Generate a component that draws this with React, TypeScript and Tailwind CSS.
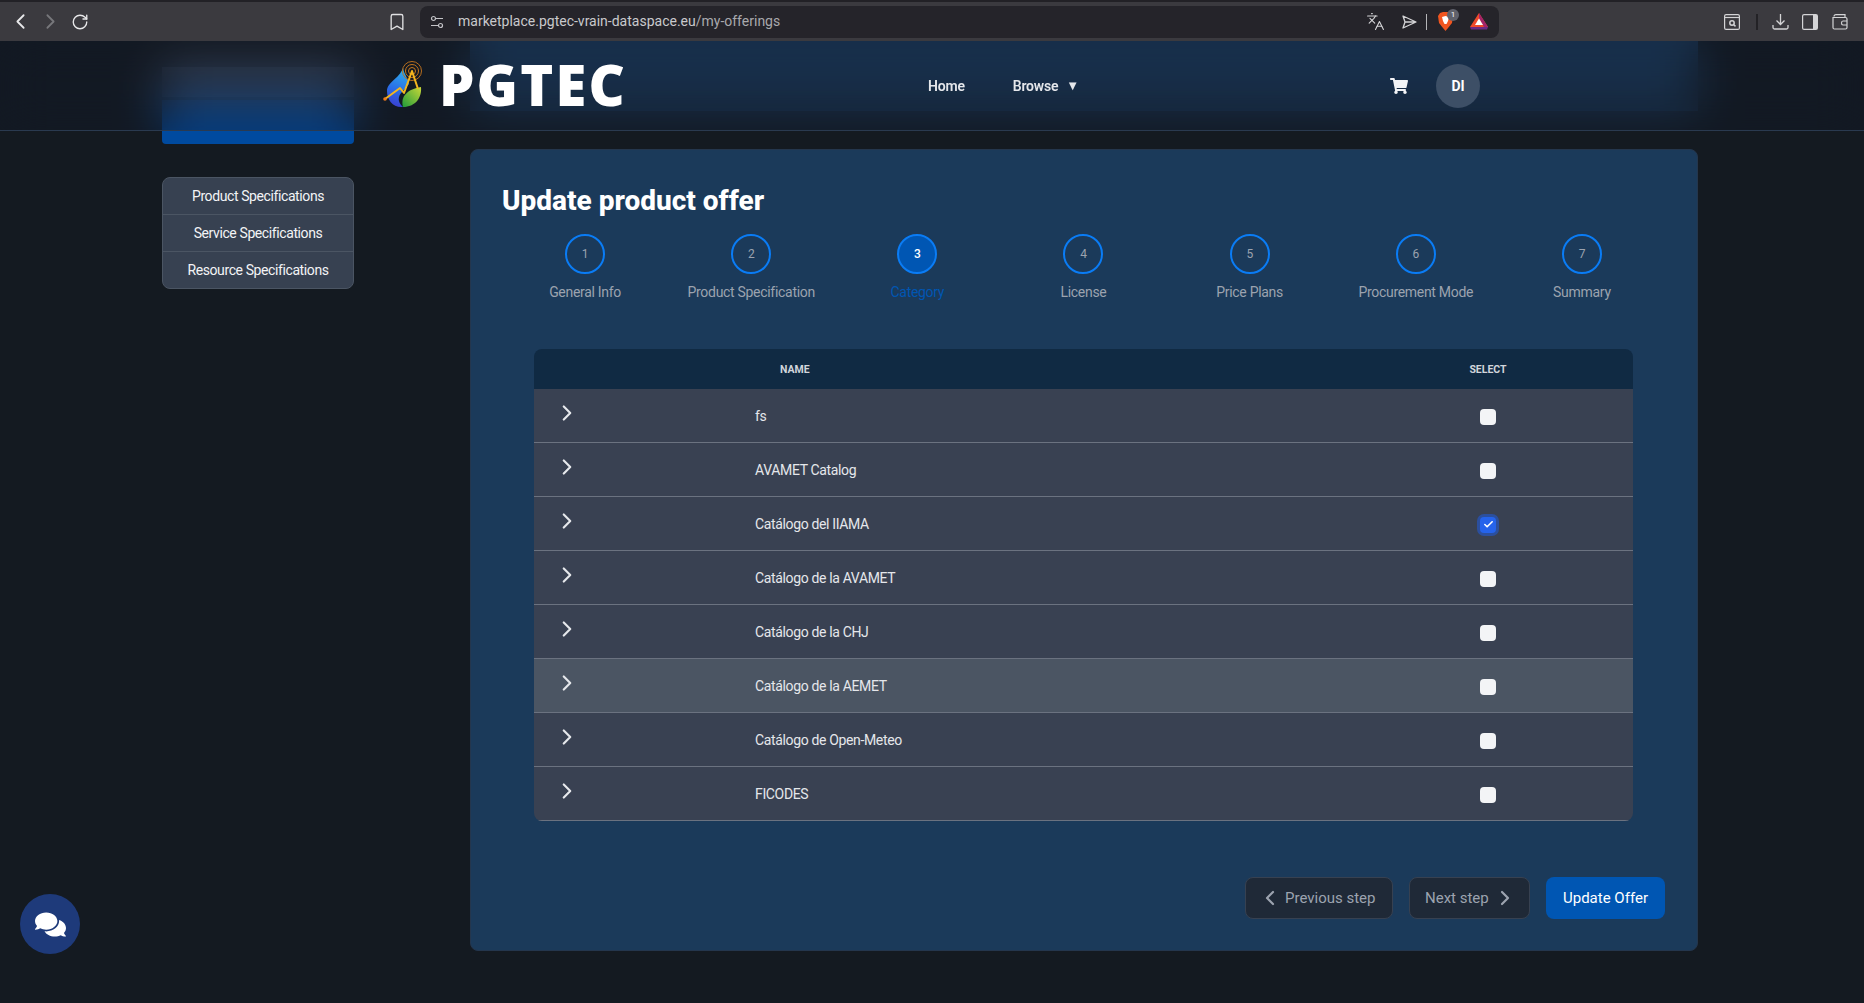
import React from "react";
import { Bookmark, Check, ChevronLeft, ChevronRight, Languages, RotateCw } from "lucide-react";
import { FaComments, FaShoppingCart } from "react-icons/fa";

const steps = ["General Info", "Product Specification", "Category", "License", "Price Plans", "Procurement Mode", "Summary"];
const rows = ["fs", "AVAMET Catalog", "Catálogo del IIAMA", "Catálogo de la AVAMET", "Catálogo de la CHJ", "Catálogo de la AEMET", "Catálogo de Open-Meteo", "FICODES"];

function Logo() {
  return (
    <svg width="60" height="60" viewBox="375 55 60 60" fill="none" className="shrink-0">
      <defs>
        <linearGradient id="fl" x1="0.6" y1="0" x2="0.4" y2="1">
          <stop offset="0" stopColor="#2fb0ea" />
          <stop offset="0.55" stopColor="#2a6fe8" />
          <stop offset="1" stopColor="#3a3fd0" />
        </linearGradient>
        <linearGradient id="lf" x1="1" y1="0" x2="0" y2="1">
          <stop offset="0" stopColor="#c8d838" />
          <stop offset="1" stopColor="#1f9a3a" />
        </linearGradient>
      </defs>
      <path d="M403 67C404 73 408 77 409 83L402 91C398 95 397 101 403 106C393 107 387 99 387 90C387 81 399 78 403 67Z" fill="url(#fl)" />
      <path d="M421 86C422 97 415 106 403 106C400 95 408 88 421 86Z" fill="url(#lf)" />
      <circle cx="412" cy="70" r="3.5" stroke="#c8791e" strokeWidth="1" />
      <circle cx="412" cy="70" r="6.5" stroke="#c8791e" strokeWidth="1" />
      <circle cx="412" cy="70" r="9.5" stroke="#b86f1e" strokeWidth="1" />
      <path d="M385 98L400 87L404 92L412 70L418 88" stroke="#f3b61f" strokeWidth="2" strokeLinejoin="round" />
      <circle cx="385" cy="98" r="1.8" fill="#f07a1a" />
    </svg>
  );
}

function Chrome() {
  const c = "#d4d4d6";
  return (
    <div className="relative z-20 flex h-[41px] shrink-0 items-center border-t-2 border-[#222126] bg-[#3b3a3f]">
      <ChevronLeft size={25} color="#e8e8ea" strokeWidth={1.7} className="ml-[8px]" />
      <ChevronRight size={25} color="#77777b" strokeWidth={1.7} className="ml-[5px]" />
      <RotateCw size={18} color="#e8e8ea" strokeWidth={1.8} className="ml-[8px]" />
      <Bookmark size={20} color="#e0e0e2" strokeWidth={1.6} className="ml-[298px]" />
      <div className="ml-[13px] flex h-[32px] w-[1079px] items-center rounded-lg bg-[#25242a] pl-[10px]">
        <svg width="14" height="14" viewBox="0 0 14 14" fill="none" stroke="#c4c4c8" strokeWidth="1.2" className="shrink-0">
          <circle cx="3.5" cy="3.5" r="2" />
          <path d="M6 3.5H13M1 10.5H8" />
          <circle cx="10.5" cy="10.5" r="2" />
        </svg>
        <span className="ml-[14px] w-[911px] shrink-0 font-['Roboto',sans-serif] text-[14px] text-[#c9c9cc]">
          marketplace.pgtec-vrain-dataspace.eu<span className="text-[#a9a9ad]">/my-offerings</span>
        </span>
        <Languages size={19} color={c} strokeWidth={1.4} className="-ml-[3px] shrink-0" />
        <svg width="15" height="14" viewBox="0 0 15 14" fill="none" stroke={c} strokeWidth="1.3" className="ml-[17px] shrink-0">
          <path d="M1 1L14 7L1 13L3 7L1 1ZM3 7H14" strokeLinejoin="round" />
        </svg>
        <div className="ml-[9px] h-[16px] w-px shrink-0 bg-[#b5b5b8]" />
        <div className="relative ml-[11px] h-[20px] w-[15px] shrink-0">
          <svg width="15" height="19" viewBox="0 0 15 19">
            <path d="M2 1L5 0H10L13 1L15 4L14 11L10 16L7.5 19L5 16L1 11L0 4Z" fill="#f0551f" />
            <path d="M4 5L7.5 4L11 5L10 9L8.5 12H6.5L5 9Z" fill="#fff" />
          </svg>
          <span className="absolute -top-[3px] left-[9px] flex h-[12px] w-[12px] items-center justify-center rounded-full bg-[#60626c] font-['Roboto',sans-serif] text-[8px] text-white">1</span>
        </div>
        <svg width="18" height="17" viewBox="0 0 18 17" className="ml-[17px] shrink-0">
          <path d="M9 0L18 14H0Z" fill="#ef4a2b" />
          <path d="M0 14H18L17 16.5H1Z" fill="#6c2a85" />
          <path d="M9 0L18 14L14 14L9 5Z" fill="#a3246a" />
          <path d="M9 5.5L13 12H5Z" fill="#fff" />
        </svg>
      </div>
      <svg width="16" height="16" viewBox="0 0 16 16" fill="none" stroke={c} strokeWidth="1.2" className="ml-[225px]">
        <rect x="0.6" y="0.6" width="14.8" height="14.8" rx="1.5" />
        <path d="M1 3.5H15" />
        <circle cx="8" cy="9" r="2.2" strokeWidth="1.5" />
        <path d="M9.8 10.8L11.5 12.4" strokeWidth="1.5" />
      </svg>
      <div className="ml-[16px] h-[16px] w-[2px] bg-[#232226]" />
      <svg width="17" height="17" viewBox="0 0 17 17" fill="none" stroke={c} strokeWidth="1.3" className="ml-[14px]">
        <path d="M8.5 1V11M4.5 7.5L8.5 11.5L12.5 7.5M1 12V14.5Q1 16 2.5 16H14.5Q16 16 16 14.5V12" />
      </svg>
      <svg width="16" height="16" viewBox="0 0 16 16" fill="none" stroke={c} strokeWidth="1.2" className="ml-[13px]">
        <rect x="0.6" y="0.6" width="14.8" height="14.8" rx="1.5" />
        <rect x="11" y="1" width="4" height="14" fill={c} stroke="none" />
      </svg>
      <svg width="16" height="16" viewBox="0 0 16 16" fill="none" stroke={c} strokeWidth="1.2" className="ml-[14px]">
        <path d="M2 2.5Q2 0.7 4 0.7H13V3M1 3.5H13.5Q15 3.5 15 5V13.5Q15 15 13.5 15H2.5Q1 15 1 13.5Z" />
        <path d="M15 7H11Q9.5 7 9.5 9Q9.5 11 11 11H15" />
      </svg>
    </div>
  );
}

function Header() {
  return (
    <header className="absolute left-0 right-0 top-0 z-10 flex h-[90px] items-center border-b border-[#2a3a50] bg-[#111827]/30 pt-[1px] backdrop-blur-xl">
      <div className="ml-[375px] flex items-center">
        <Logo />
        <span className="-mt-[5px] ml-[4px] font-['Open_Sans',sans-serif] text-[56px] font-extrabold leading-none tracking-[2.2px] text-white">PGTEC</span>
      </div>
      <nav className="ml-[301px] flex w-[150px] items-center font-['Roboto',sans-serif] text-[14px] font-semibold tracking-[-0.2px] text-[#e5e7eb]">
        <span>Home</span>
        <span className="ml-[48px]">Browse</span>
        <span className="ml-[8px] text-[13px]">▼</span>
      </nav>
      <FaShoppingCart size={18} color="#f3f4f6" className="ml-[312px]" />
      <div className="ml-[28px] flex h-[44px] w-[44px] items-center justify-center rounded-full bg-[#3d4f66] font-['Roboto',sans-serif] text-[14px] font-bold text-white">DI</div>
    </header>
  );
}

function Aside() {
  return (
    <aside className="ml-[162px] flex w-[192px] shrink-0 flex-col pt-[26px]">
      <div className="h-[30px] bg-[#4a5568]" />
      <div className="mt-[3px] h-[44px] rounded-b bg-[#004a9f]" />
      <div className="mt-[33px] flex flex-col overflow-hidden rounded-lg border border-[#4b5563] bg-[#374151] text-center text-[14px] tracking-[-0.4px] text-[#f3f4f6]">
        <div className="flex h-[37px] items-center justify-center border-b border-[#4b5563]">Product Specifications</div>
        <div className="flex h-[37px] items-center justify-center border-b border-[#4b5563]">Service Specifications</div>
        <div className="flex h-[36px] items-center justify-center">Resource Specifications</div>
      </div>
    </aside>
  );
}

function Stepper() {
  return (
    <div className="mt-[15px] grid grid-cols-7 pr-[1px] tracking-[-0.3px]">
      {steps.map((s, i) => (
        <div key={s} className="flex flex-col items-center">
          <div className={i === 2 ? "flex h-[40px] w-[40px] items-center justify-center rounded-full border-2 border-[#0a7cf5] bg-[#0056b3] text-[12px] font-medium text-white" : "flex h-[40px] w-[40px] items-center justify-center rounded-full border-2 border-[#0a7cf5] text-[12px] text-[#9ca3af]"}>
            {i + 1}
          </div>
          <span className={i === 2 ? "mt-[8px] text-[14px] leading-5 text-[#0056b3]" : "mt-[8px] text-[14px] leading-5 text-[#9ca3af]"}>{s}</span>
        </div>
      ))}
    </div>
  );
}

function CategoryTable() {
  return (
    <div className="ml-8 mr-[33px] mt-[47px] overflow-hidden rounded-lg">
      <div className="grid h-[40px] grid-cols-[221px_1fr_290px] items-center bg-[#102a43] pt-[2px] text-[10.5px] font-bold text-[#d1d5db]">
        <span />
        <span className="pl-[25px]">NAME</span>
        <span className="text-center">SELECT</span>
      </div>
      {rows.map((r, i) => (
        <div key={r} className={i === 5 ? "grid h-[54px] grid-cols-[221px_1fr_290px] border-b border-[#6b7280] bg-[#4b5563] text-[14px] tracking-[-0.35px] text-[#e5e7eb]" : "grid h-[54px] grid-cols-[221px_1fr_290px] border-b border-[#6b7280] bg-[#394152] text-[14px] tracking-[-0.35px] text-[#e5e7eb]"}>
          <div className="pl-[20px] pt-[11px]">
            <ChevronRight size={26} color="#e5e7eb" strokeWidth={2} />
          </div>
          <div className="flex items-center pt-[2px]">{r}</div>
          <div className="flex items-center justify-center pt-[2px]">
            {i === 2 ? (
              <div className="flex h-[16px] w-[16px] items-center justify-center rounded-[4px] bg-[#2563eb] ring-[3px] ring-[#2b4f9e]">
                <Check size={11} color="#fff" strokeWidth={3.5} />
              </div>
            ) : (
              <div className="h-[16px] w-[16px] rounded-[4px] bg-[#f3f4f6]" />
            )}
          </div>
        </div>
      ))}
    </div>
  );
}

function Actions() {
  return (
    <div className="mt-[56px] flex justify-end gap-4 pr-[1px] text-[15px]">
      <div className="flex h-[42px] w-[148px] items-center gap-[3px] rounded-lg border border-[#374151] bg-[#1f2937] pl-[12px] text-[#9ca3af]">
        <ChevronLeft size={24} strokeWidth={2.2} />
        <span>Previous step</span>
      </div>
      <div className="flex h-[42px] w-[121px] items-center gap-[4px] rounded-lg border border-[#374151] bg-[#1f2937] pl-[15px] text-[#9ca3af]">
        <span>Next step</span>
        <ChevronRight size={24} strokeWidth={2.2} />
      </div>
      <div className="flex h-[42px] w-[119px] items-center justify-center rounded-lg bg-[#0056b3] text-white">Update Offer</div>
    </div>
  );
}

export default function App() {
  return (
    <div className="relative flex h-screen w-full flex-col overflow-hidden bg-[#141a21] font-['Roboto',sans-serif]">
      <Chrome />
      <main className="relative flex flex-1 items-start">
        <Header />
        <Aside />
        <div className="ml-[116px] flex w-[1228px] shrink-0 flex-col">
          <div className="h-[70px] bg-[#1b3a5a]" />
          <section className="mt-[38px] rounded-lg border border-[#24364d] bg-[#1b3a5a] px-[31px] pb-[31px] pt-[33px]">
            <h1 className="text-[28px] font-extrabold leading-9 text-white">Update product offer</h1>
            <Stepper />
            <CategoryTable />
            <Actions />
          </section>
        </div>
        <div className="absolute bottom-[49px] left-[20px] z-10 flex h-[60px] w-[60px] items-center justify-center rounded-full bg-[#1e3a7a]">
          <FaComments size={31} color="#fff" />
        </div>
      </main>
    </div>
  );
}
